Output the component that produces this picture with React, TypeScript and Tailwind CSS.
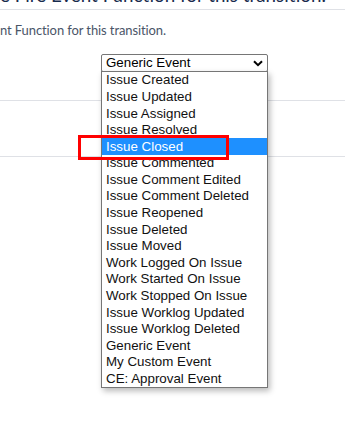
const events = [
  "Issue Created",
  "Issue Updated",
  "Issue Assigned",
  "Issue Resolved",
  "Issue Closed",
  "Issue Commented",
  "Issue Comment Edited",
  "Issue Comment Deleted",
  "Issue Reopened",
  "Issue Deleted",
  "Issue Moved",
  "Work Logged On Issue",
  "Work Started On Issue",
  "Work Stopped On Issue",
  "Issue Worklog Updated",
  "Issue Worklog Deleted",
  "Generic Event",
  "My Custom Event",
  "CE: Approval Event",
];

const selected = "Issue Closed";

function Chevron() {
  return (
    <svg width="10" height="7" viewBox="0 0 10 7" className="shrink-0">
      <path d="M1 1.2 L5 5.2 L9 1.2" fill="none" stroke="#000" strokeWidth="2" />
    </svg>
  );
}

export default function App() {
  return (
    <div className="relative h-[431px] w-[345px] overflow-hidden bg-white font-['Lato',sans-serif]">
      {/* page heading, scrolled mostly out of view */}
      <div className="h-[10px] overflow-hidden border-b border-[#dfe1e6]">
        <p className="-mt-[16px] whitespace-nowrap text-[18.8px] leading-[22px] text-[#172b4d]">
          e Fire Event Function for this transition.
        </p>
      </div>

      <div className="h-[91px] border-b border-[#dfe1e6]">
        <p className="pt-[11px] whitespace-nowrap text-[13px] leading-[18px] tracking-[-0.1px] text-[#4a5568]">
          nt Function for this transition.
        </p>
        <div className="mt-[15px] pl-[101px]">
          <div className="flex h-[18px] w-[167px] items-center justify-between rounded-[2px] border border-[#767676] bg-white pl-[4px] pr-[4px] font-['Liberation_Sans',sans-serif] text-[13.33px] leading-none text-black">
            <span>Generic Event</span>
            <Chevron />
          </div>
        </div>
      </div>

      <div className="h-[56px] border-b border-[#dfe1e6]" />

      {/* open select list */}
      <ul className="absolute left-[101px] top-[71px] w-[167px] border border-[#767676] bg-white font-['Liberation_Sans',sans-serif] text-[13.33px] shadow-[2px_3px_6px_rgba(0,0,0,0.28)]">
        {events.map((name) => (
          <li
            key={name}
            className={
              name === selected
                ? "flex h-[16.6px] items-center whitespace-nowrap bg-[#1e90ff] pl-[4px] text-white"
                : "flex h-[16.6px] items-center whitespace-nowrap pl-[4px] text-[#111]"
            }
          >
            {name}
          </li>
        ))}
      </ul>

      {/* annotation box */}
      <div className="absolute left-[78px] top-[135px] h-[25px] w-[151px] border-[3px] border-[#ff0000]" />
    </div>
  );
}
